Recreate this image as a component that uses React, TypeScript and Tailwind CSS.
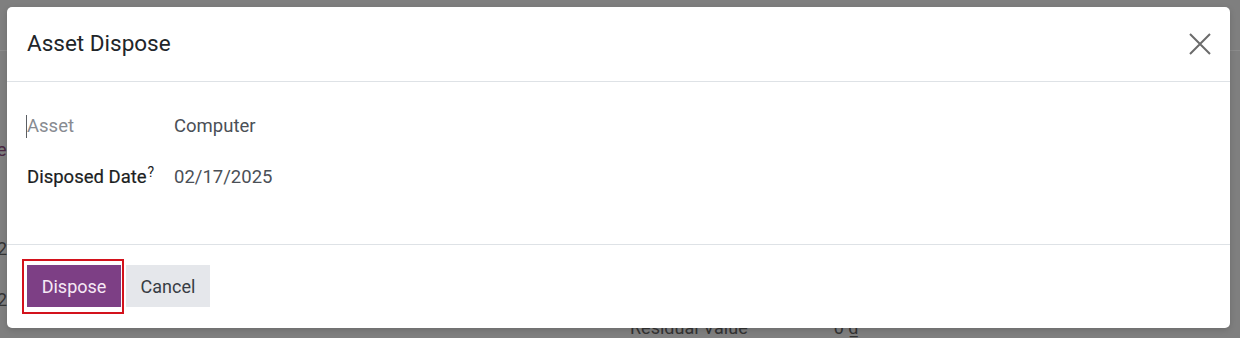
function Field({
	label,
	value,
	muted,
	help,
	caret,
}: {
	label: string;
	value: string;
	muted?: boolean;
	help?: boolean;
	caret?: boolean;
}) {
	return (
		<div className="flex h-[28px] items-center">
			<div className="relative flex w-[147px] shrink-0 items-center">
				{caret && <span className="absolute -left-[1px] top-[2px] h-[23px] w-px bg-[#5b5f64]" />}
				<span
					className={
						muted
							? "text-[18.5px] text-[#878b91]"
							: "text-[18.5px] text-[#1b1e22] [-webkit-text-stroke:0.2px_#1b1e22]"
					}
				>
					{label}
				</span>
				{help && (
					<sup className="relative -top-[6px] ml-[1px] text-[14px] text-[#1b1e22]">?</sup>
				)}
			</div>
			<span className="text-[18.5px] text-[#4b5057]">{value}</span>
		</div>
	);
}

export default function App() {
	return (
		<div className="relative h-[338px] w-[1240px] overflow-hidden bg-[#7f7f7f] font-['Roboto',sans-serif]">
			{/* dimmed page behind the dialog */}
			<div className="flex h-full flex-col">
				<div className="h-[51px] shrink-0 border-b border-[#8b8b8b]" />
				<div className="flex flex-1">
					<div className="-ml-[3px] flex w-[20px] flex-col text-[18px] leading-[24px]">
						<span className="mt-[87px] text-[#4a2842]">e</span>
						<span className="mt-[75px] text-[#333333]">2</span>
						<span className="mt-[27px] text-[#333333]">2</span>
					</div>
					<div className="ml-[613px] flex items-start gap-[86px] pt-[263px] text-[18px] leading-[27px] text-[#333333]">
						<span>Residual Value</span>
						<span>
							0 <span className="underline">₫</span>
						</span>
					</div>
				</div>
			</div>

			{/* dialog */}
			<div className="absolute left-[7px] top-[7px] flex h-[321px] w-[1223px] flex-col rounded-[5px] bg-white shadow-[0_2px_6px_rgba(0,0,0,0.15)]">
				<header className="flex h-[75px] shrink-0 items-center justify-between border-b border-[#dee2e6] pl-[20px] pr-[19px]">
					<h4 className="text-[22.5px] text-[#212529]">Asset Dispose</h4>
					<button className="flex size-[22px] items-center justify-center text-[#6b6b6b]">
						<svg viewBox="0 0 22 22" className="size-[22px]" fill="none" stroke="currentColor" strokeWidth={2}>
							<path d="M1 1 21 21M21 1 1 21" />
						</svg>
					</button>
				</header>

				<div className="flex h-[163px] shrink-0 flex-col gap-[23px] border-b border-[#dee2e6] px-[20px] pt-[31px]">
					<Field label="Asset" value="Computer" muted caret />
					<Field label="Disposed Date" value="02/17/2025" help />
				</div>

				<footer className="flex flex-1 items-start gap-[5px] px-[20px] pt-[20px]">
					<button className="relative flex h-[42px] w-[94px] items-center justify-center bg-[#7d3f85] text-[18px] text-[#f6e9f5]">
						Dispose
						<span className="pointer-events-none absolute -bottom-[7px] -left-[5px] -right-[3px] -top-[6px] border-2 border-[#d3121c]" />
					</button>
					<button className="flex h-[42px] w-[84px] items-center justify-center bg-[#e5e7eb] text-[18px] text-[#383d44]">
						Cancel
					</button>
				</footer>
			</div>
		</div>
	);
}
